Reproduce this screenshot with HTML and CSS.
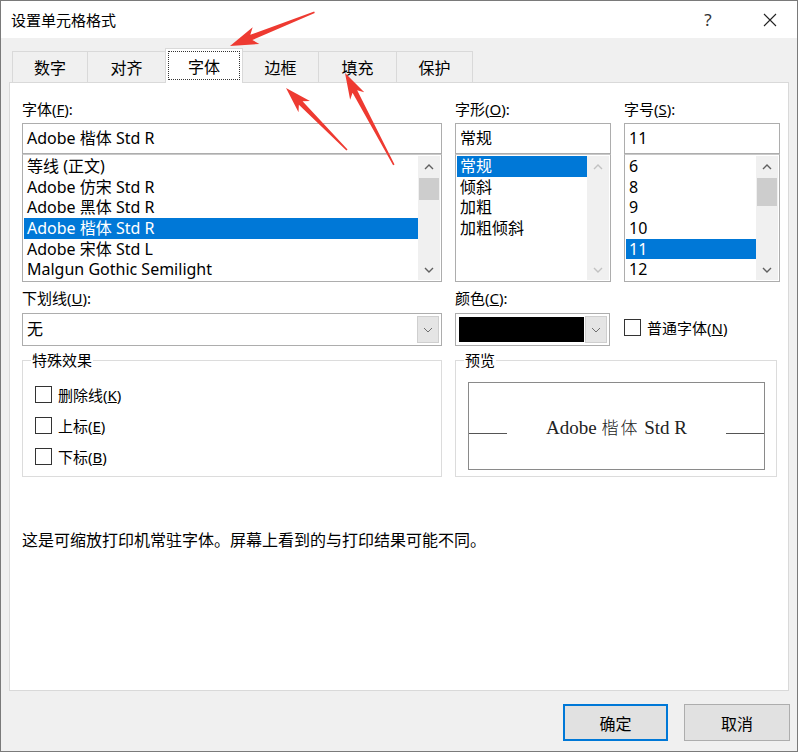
FILE: index.html
```html
<!DOCTYPE html>
<html lang="zh-CN">
<head>
  <meta charset="UTF-8">
  <title>设置单元格格式</title>
  <link rel="stylesheet" href="styles.css">
</head>
<body>

  <div class="window">
    <div class="titlebar">
      <div class="title">设置单元格格式</div>
      <div class="cap-btn help">?</div>
      <div class="cap-btn close">
        <svg width="14" height="14" viewBox="0 0 14 14"><path d="M1 1L13 13M13 1L1 13" stroke="#222" stroke-width="1.1" fill="none"/></svg>
      </div>
    </div>

    <div class="tabs">
      <div class="tab w75">数字</div>
      <div class="tab w78">对齐</div>
      <div class="tab active"><span class="focus">字体</span></div>
      <div class="tab w76">边框</div>
      <div class="tab w78">填充</div>
      <div class="tab w76">保护</div>
    </div>

    <div class="panel">
      <div class="cols top-row">
        <div class="col col-font">
          <div class="label">字体(<span class="ul">F</span>):</div>
          <div class="textbox">Adobe 楷体 Std R</div>
          <div class="listbox">
            <div class="items">
              <div class="item">等线 (正文)</div>
              <div class="item">Adobe 仿宋 Std R</div>
              <div class="item">Adobe 黑体 Std R</div>
              <div class="item selected">Adobe 楷体 Std R</div>
              <div class="item">Adobe 宋体 Std L</div>
              <div class="item">Malgun Gothic Semilight</div>
            </div>
            <div class="scrollbar">
              <div class="sb-btn"><svg width="10" height="6" viewBox="0 0 10 6"><polyline points="1,5 5,1 9,5" class="chev"/></svg></div>
              <div class="thumb"></div>
              <div class="sb-fill"></div>
              <div class="sb-btn"><svg width="10" height="6" viewBox="0 0 10 6"><polyline points="1,1 5,5 9,1" class="chev"/></svg></div>
            </div>
          </div>
        </div>

        <div class="col col-small">
          <div class="label">字形(<span class="ul">O</span>):</div>
          <div class="textbox">常规</div>
          <div class="listbox">
            <div class="items">
              <div class="item selected">常规</div>
              <div class="item">倾斜</div>
              <div class="item">加粗</div>
              <div class="item">加粗倾斜</div>
            </div>
            <div class="scrollbar disabled">
              <div class="sb-btn"><svg width="10" height="6" viewBox="0 0 10 6"><polyline points="1,5 5,1 9,5" class="chev"/></svg></div>
              <div class="sb-fill"></div>
              <div class="sb-btn"><svg width="10" height="6" viewBox="0 0 10 6"><polyline points="1,1 5,5 9,1" class="chev"/></svg></div>
            </div>
          </div>
        </div>

        <div class="col col-small">
          <div class="label">字号(<span class="ul">S</span>):</div>
          <div class="textbox">11</div>
          <div class="listbox">
            <div class="items">
              <div class="item">6</div>
              <div class="item">8</div>
              <div class="item">9</div>
              <div class="item">10</div>
              <div class="item selected">11</div>
              <div class="item">12</div>
            </div>
            <div class="scrollbar">
              <div class="sb-btn"><svg width="10" height="6" viewBox="0 0 10 6"><polyline points="1,5 5,1 9,5" class="chev"/></svg></div>
              <div class="thumb tall"></div>
              <div class="sb-fill"></div>
              <div class="sb-btn"><svg width="10" height="6" viewBox="0 0 10 6"><polyline points="1,1 5,5 9,1" class="chev"/></svg></div>
            </div>
          </div>
        </div>
      </div>

      <div class="cols mid-row">
        <div class="col col-font">
          <div class="label">下划线(<span class="ul">U</span>):</div>
          <div class="combo">
            <div class="combo-value">无</div>
            <div class="drop"><svg width="10" height="6" viewBox="0 0 10 6"><polyline points="1,1 5,5 9,1" class="chev light"/></svg></div>
          </div>
        </div>
        <div class="col col-small">
          <div class="label">颜色(<span class="ul">C</span>):</div>
          <div class="combo color">
            <div class="swatch"></div>
            <div class="drop"><svg width="10" height="6" viewBox="0 0 10 6"><polyline points="1,1 5,5 9,1" class="chev light"/></svg></div>
          </div>
        </div>
        <div class="col col-small">
          <div class="check normal"><span class="box"></span>普通字体(<span class="ul">N</span>)</div>
        </div>
      </div>

      <div class="cols group-row">
        <fieldset class="group effects">
          <legend>特殊效果</legend>
          <div class="check"><span class="box"></span>删除线(<span class="ul">K</span>)</div>
          <div class="check"><span class="box"></span>上标(<span class="ul">E</span>)</div>
          <div class="check"><span class="box"></span>下标(<span class="ul">B</span>)</div>
        </fieldset>
        <fieldset class="group preview">
          <legend>预览</legend>
          <div class="preview-box">
            <div class="base-line"></div>
            <div class="sample">Adobe <span class="kai">楷体</span> Std R</div>
            <div class="base-line"></div>
          </div>
        </fieldset>
      </div>

      <p class="note">这是可缩放打印机常驻字体。屏幕上看到的与打印结果可能不同。</p>
    </div>

    <div class="buttons">
      <div class="btn default">确定</div>
      <div class="btn">取消</div>
    </div>

    <!-- red annotation arrows drawn over the screenshot -->
    <svg class="arrows" width="800" height="752" viewBox="0 0 800 752">
      <g fill="#ee3a31">
        <polygon transform="translate(230,46) rotate(-21.8)" points="0,0 28,-9 23,-2.8 91,-0.8 91,0.8 23,2.8 28,9"/>
        <polygon transform="translate(286,88) rotate(45.5)" points="0,0 26,-8 21,-2.6 87,-0.8 87,0.8 21,2.6 26,8"/>
        <polygon transform="translate(345,73) rotate(62)" points="0,0 26,-8 21,-2.6 104,-0.8 104,0.8 21,2.6 26,8"/>
      </g>
    </svg>
  </div>

</body>
</html>
```

FILE: styles.css
```css
:root {
  --dialog-bg: #f0f0f0;
  --tab-border: #d9d9d9;
  --field-border: #adadad;
  --group-border: #dcdcdc;
  --select-bg: #0078d7;
}

* { margin: 0; padding: 0; box-sizing: border-box; }

body {
  font-family: "Noto Sans", "Noto Sans CJK SC", sans-serif;
  font-size: 15px;
  color: #000;
  background: #fff;
}

.window {
  position: relative;
  width: 798px;
  height: 752px;
  border: 1px solid #7a7a7a;
  background: var(--dialog-bg);
  display: flex;
  flex-direction: column;
  overflow: hidden;
}

/* title bar */
.titlebar {
  height: 37px;
  flex: none;
  background: #fff;
  display: flex;
  align-items: center;
  padding-left: 10px;
  padding-right: 4px;
}

.title {
  flex: 1;
  font-size: 15px;
}

.cap-btn {
  width: 46px;
  height: 37px;
  display: flex;
  align-items: center;
  justify-content: center;
  margin-left: 16px;
}

.help {
  font-size: 17px;
  color: #333;
}

/* tabs */
.tabs {
  display: flex;
  align-items: flex-end;
  height: 34px;
  margin-top: 10px;
  padding-left: 11px;
  flex: none;
}

.tab {
  height: 31px;
  border: 1px solid var(--tab-border);
  border-bottom: none;
  margin-right: -1px;
  display: flex;
  align-items: center;
  justify-content: center;
  font-size: 16px;
  background: var(--dialog-bg);
}

.w75 { width: 76px; }
.w76 { width: 77px; }
.w78 { width: 79px; }

.tab.active {
  width: 78px;
  height: 35px;
  background: #fff;
  position: relative;
  z-index: 1;
  margin-bottom: -1px;
  padding: 2px 2px 3px;
}

.focus {
  flex: 1;
  align-self: stretch;
  display: flex;
  align-items: center;
  justify-content: center;
  border: 1px dotted #333;
}

/* main panel */
.panel {
  height: 609px;
  margin: 0 8px;
  background: #fff;
  border: 1px solid var(--tab-border);
  padding: 15px 0 0 12px;
  flex: none;
}

.cols {
  display: flex;
  gap: 13px;
}

.col-font { width: 420px; }
.col-small { width: 156px; }

.label {
  height: 22px;
  line-height: 22px;
  margin-bottom: 3px;
}

.ul { text-decoration: underline; }

.textbox {
  height: 31px;
  border: 1px solid var(--field-border);
  padding-left: 4px;
  line-height: 28px;
  font-size: 16px;
}

.listbox {
  height: 128px;
  border: 1px solid var(--field-border);
  border-top-color: #c8c8c8;
  padding: 1px;
  display: flex;
}

.items {
  flex: 1;
  overflow: hidden;
}

.item {
  height: 20.67px;
  line-height: 20.67px;
  padding-left: 3px;
  white-space: nowrap;
  font-size: 16px;
}

.item.selected {
  background: var(--select-bg);
  color: #fff;
}

.scrollbar {
  width: 22px;
  background: var(--dialog-bg);
  display: flex;
  flex-direction: column;
}

.sb-btn {
  height: 21px;
  display: flex;
  align-items: center;
  justify-content: center;
}

.thumb {
  height: 22px;
  margin: 1px 1px 0;
  background: #cdcdcd;
}

.thumb.tall { height: 28px; }

.sb-fill { flex: 1; }

.chev {
  fill: none;
  stroke: #606060;
  stroke-width: 1.4;
}

.scrollbar.disabled .chev { stroke: #c2c2c2; }

.chev.light {
  stroke: #707070;
  stroke-width: 1;
}

/* underline / colour row */
.mid-row { margin-top: 5px; }

.mid-row .label { margin-bottom: 4px; }

.combo {
  height: 33px;
  border: 1px solid var(--field-border);
  display: flex;
  padding: 2px;
  background: #fff;
}

.combo.color { width: 155px; }

.combo-value {
  flex: 1;
  line-height: 27px;
  padding-left: 2px;
  font-size: 16px;
}

.swatch {
  flex: 1;
  background: #000;
  margin: 1px;
}

.drop {
  width: 22px;
  background: #e5e5e5;
  border: 1px solid #cfcfcf;
  display: flex;
  align-items: center;
  justify-content: center;
}

.check {
  display: flex;
  align-items: center;
  height: 31px;
}

.check .box {
  width: 17px;
  height: 17px;
  border: 1px solid #333;
  background: #fff;
  margin-right: 6px;
  flex: none;
}

.check.normal {
  margin-top: 24px;
  height: 33px;
}

/* group boxes */
.group-row { margin-top: 5px; }

.group {
  border: 1px solid var(--group-border);
  padding: 0 8px;
  height: 126px;
}

.group legend {
  padding: 0 1px;
  line-height: 18px;
}

.effects {
  width: 420px;
  padding-top: 10px;
  padding-left: 12px;
}

.effects legend { margin-left: -4px; }

.preview { width: 322px; }

.preview-box {
  width: 297px;
  height: 88px;
  margin: 13px 0 0 4px;
  border: 1px solid #8a8a8a;
  display: flex;
  align-items: center;
  justify-content: space-between;
}

.base-line {
  width: 38px;
  height: 1px;
  background: #555;
  margin-top: 15px;
}

.sample {
  font-family: "Liberation Serif", "Noto Sans CJK SC", serif;
  font-size: 19px;
  color: #222;
}

.kai {
  font-weight: 300;
  letter-spacing: 2px;
  font-size: 17px;
}

.note {
  margin-top: 52px;
  line-height: 22px;
  font-size: 16px;
}

/* dialog buttons */
.buttons {
  display: flex;
  justify-content: flex-end;
  gap: 16px;
  margin-top: 13px;
  padding-right: 7px;
}

.btn {
  width: 106px;
  height: 37px;
  background: #e1e1e1;
  border: 1px solid #adadad;
  display: flex;
  align-items: center;
  justify-content: center;
  font-size: 16px;
}

.btn.default {
  width: 105px;
  border: 2px solid #0078d7;
}

.arrows {
  position: absolute;
  left: -1px;
  top: -1px;
  pointer-events: none;
  z-index: 5;
}
```
